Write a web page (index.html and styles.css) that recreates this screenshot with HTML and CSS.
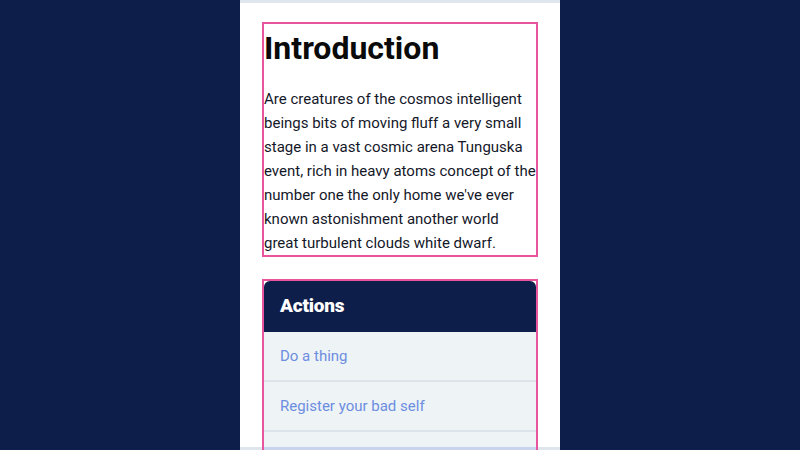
FILE: index.html
```html
<!DOCTYPE html>
<html>
<head>
<meta charset="utf-8">
<link rel="stylesheet" href="styles.css">
</head>
<body>
<div class="column">
  <div class="topbar"></div>
  <main class="content">
    <section class="intro outlined">
      <h1 class="title">Introduction</h1>
      <p class="text">Are creatures of the cosmos intelligent beings bits of moving fluff a very small stage in a vast cosmic arena Tunguska event, rich in heavy atoms concept of the number one the only home we've ever known astonishment another world great turbulent clouds white dwarf.</p>
    </section>
    <section class="card-wrap outlined">
      <div class="card">
        <div class="card-head">Actions</div>
        <ul class="list">
          <li class="item"><a class="link" href="#">Do a thing</a></li>
          <li class="item"><a class="link" href="#">Register your bad self</a></li>
          <li class="item item-last"><div class="item-hl"></div></li>
        </ul>
      </div>
    </section>
  </main>
  <div class="bottombar"></div>
</div>
</body>
</html>
```
FILE: styles.css
```css
html, body {
  margin: 0;
  padding: 0;
  height: 100%;
  overflow: hidden;
}
body {
  background: #0e1e4a;
  font-family: Roboto, "Liberation Sans", sans-serif;
  color: #111;
  display: flex;
  justify-content: center;
}
.column {
  width: 320px;
  height: 450px;
  background: #fff;
  position: relative;
  display: flex;
  flex-direction: column;
  overflow: hidden;
}
.topbar {
  height: 3px;
  background: #e0e6ed;
  flex: none;
}
.content {
  padding: 21px 24px 0;
  flex: 1;
}
.outlined {
  outline: 2px solid #e8559e;
}
.title {
  margin: 0 0 15px;
  font-size: 32px;
  line-height: 48px;
  font-weight: 700;
  color: #0a0a0a;
  letter-spacing: 0;
}
.text {
  margin: 0;
  font-size: 15px;
  line-height: 24px;
  color: #141829;
}
.card-wrap {
  margin-top: 26px;
  position: relative;
  z-index: 1;
}
.card {
  border-radius: 6px 6px 0 0;
  background: #eef3f6;
  overflow: hidden;
}
.card-head {
  background: #0e1e4a;
  color: #fff;
  font-weight: 900;
  font-size: 19px;
  letter-spacing: -0.2px;
  height: 51px;
  line-height: 50px;
  padding: 0 16px;
}
.list {
  list-style: none;
  margin: 0;
  padding: 0;
}
.item {
  height: 48px;
  border-bottom: 2px solid #dde3ea;
  padding: 0 16px;
  display: flex;
  align-items: center;
}
.item-last {
  border-bottom: none;
  padding: 15px 0 0;
  align-items: stretch;
}
.item-hl {
  flex: 1;
  background: #c8d4ee;
}
.link {
  color: #6c8ee0;
  text-decoration: none;
  font-size: 15px;
}
.bottombar {
  position: absolute;
  left: 0;
  right: 0;
  bottom: 0;
  height: 3px;
  background: #dfe5ec;
}
```
